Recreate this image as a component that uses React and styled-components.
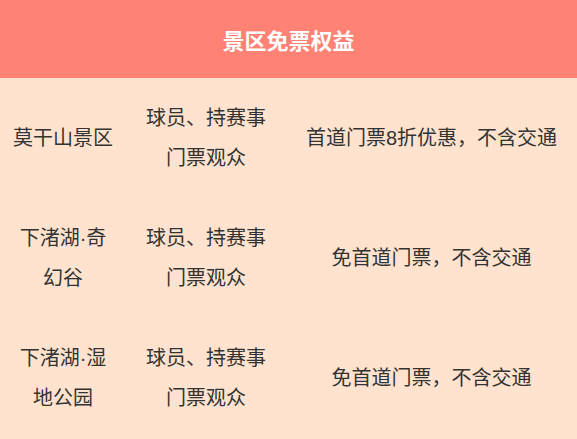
import React from 'react'
import styled, { createGlobalStyle } from 'styled-components'

const GlobalStyle = createGlobalStyle`
  html, body {
    margin: 0;
    padding: 0;
    background: #ffe3ce;
  }
  body {
    font-family: "Liberation Sans", "Noto Sans CJK SC", sans-serif;
  }
`

const Table = styled.section`
  width: 577px;
  background: #ffe3ce;
`

const Title = styled.header`
  height: 78px;
  display: flex;
  align-items: center;
  justify-content: center;
  background: #ff8274;
  color: #fff;
  font-size: 22px;
  font-weight: 700;
`

const Row = styled.div`
  display: grid;
  grid-template-columns: 126px 160px 1fr;
  height: 120px;
`

const Cell = styled.div`
  display: flex;
  align-items: center;
  justify-content: center;
  padding: 0 12px;
  text-align: center;
  font-size: 20px;
  line-height: 40px;
  color: #333;
`

const rows = [
  { place: '莫干山景区', who: '球员、持赛事门票观众', benefit: '首道门票8折优惠，不含交通' },
  { place: '下渚湖·奇幻谷', who: '球员、持赛事门票观众', benefit: '免首道门票，不含交通' },
  { place: '下渚湖·湿地公园', who: '球员、持赛事门票观众', benefit: '免首道门票，不含交通' },
]

const App = () => (
  <>
    <GlobalStyle />
    <Table>
      <Title>景区免票权益</Title>
      {rows.map((r) => (
        <Row key={r.place}>
          <Cell>{r.place}</Cell>
          <Cell>{r.who}</Cell>
          <Cell>{r.benefit}</Cell>
        </Row>
      ))}
    </Table>
  </>
)

export default App
